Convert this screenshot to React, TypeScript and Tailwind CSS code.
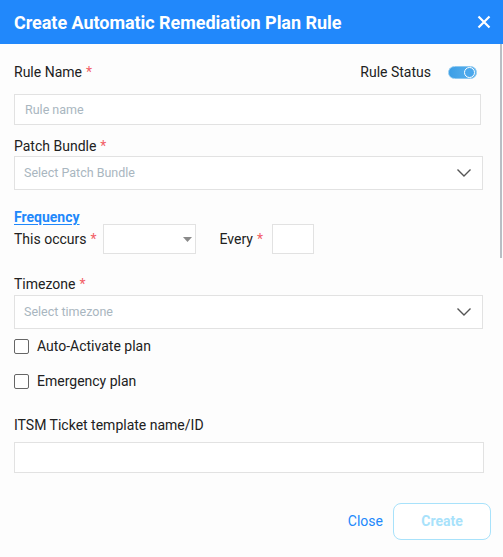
import React, { useState } from 'react';

const Star = () => <span className="text-[#f25f67] ml-1">*</span>;

const Chevron = () => (
  <svg width="16" height="10" viewBox="0 0 16 10" className="text-[#555]">
    <path d="M1.5 1.5 L8 8 L14.5 1.5" fill="none" stroke="currentColor" strokeWidth="1.4" />
  </svg>
);

const App: React.FC = () => {
  const [active, setActive] = useState(true);
  const [autoActivate, setAutoActivate] = useState(false);
  const [emergency, setEmergency] = useState(false);

  return (
    <div className="relative w-[503px] h-[557px] bg-[#fdfdfd] overflow-hidden text-[#212121]" style={{ fontFamily: 'Roboto, "Liberation Sans", sans-serif' }}>
      {/* Header */}
      <div className="h-[44px] bg-[#2188fb] flex items-center justify-between pl-[14px] pr-[12px]">
        <h1 className="text-white text-[18px] font-bold tracking-[-0.05px]">Create Automatic Remediation Plan Rule</h1>
        <button className="text-white">
          <svg width="14" height="14" viewBox="0 0 14 14">
            <path d="M1.5 1.5 L12.5 12.5 M12.5 1.5 L1.5 12.5" stroke="currentColor" strokeWidth="2.2" />
          </svg>
        </button>
      </div>

      {/* scrollbar */}
      <div className="absolute right-[1px] top-[44px] w-[2px] h-[214px] bg-[#b9bec4]" />

      <div className="pl-[14px] pr-[20px] pt-[19px] text-[14px]">
        {/* Rule name + status */}
        <div className="flex items-center justify-between h-[18px]">
          <label>Rule Name<Star /></label>
          <div className="flex items-center gap-[17px] pr-[6px]">
            <span>Rule Status</span>
            <button
              onClick={() => setActive(!active)}
              className="w-[29px] h-[13px] rounded-full bg-gradient-to-r from-[#3a9ee6] to-[#5db3ee] border border-[#8cc8f0] relative"
            >
              <span className="absolute right-[1px] top-[0px] w-[11px] h-[11px] rounded-full border border-white bg-[#4aa7ec]" />
            </button>
          </div>
        </div>
        <input
          placeholder="Rule name"
          className="mt-[13px] w-[467px] h-[31px] border border-[#e2e2e2] bg-white px-[10px] text-[12.5px] placeholder-[#a9b6c0] outline-none"
        />

        {/* Patch bundle */}
        <div className="mt-[11px] h-[18px]">Patch Bundle<Star /></div>
        <div className="mt-[2px] w-[469px] h-[34px] border border-[#e2e2e2] bg-white flex items-center justify-between pl-[9px] pr-[10px]">
          <span className="text-[12.5px] text-[#a9b6c0]">Select Patch Bundle</span>
          <Chevron />
        </div>

        {/* Frequency */}
        <div className="mt-[18px] text-[14px] font-bold text-[#2188fb] underline underline-offset-2 leading-[18px]">Frequency</div>
        <div className="mt-[-2px] flex items-center h-[30px]">
          <span>This occurs<Star /></span>
          <div className="ml-[6px] w-[93px] h-[30px] border border-[#e2e2e2] bg-white flex items-center justify-end pr-[3px]">
            <svg width="9" height="5" viewBox="0 0 9 5"><path d="M0 0 L9 0 L4.5 5 Z" fill="#8a8a8a" /></svg>
          </div>
          <span className="ml-[24px]">Every<Star /></span>
          <div className="ml-[9px] w-[42px] h-[30px] border border-[#e2e2e2] bg-white" />
        </div>

        {/* Timezone */}
        <div className="mt-[20px] h-[18px]">Timezone<Star /></div>
        <div className="mt-[3px] w-[469px] h-[34px] border border-[#e2e2e2] bg-white flex items-center justify-between pl-[9px] pr-[10px]">
          <span className="text-[12.5px] text-[#a9b6c0]">Select timezone</span>
          <Chevron />
        </div>

        {/* Checkboxes */}
        <label className="mt-[8px] flex items-center gap-[8px] h-[18px] cursor-pointer">
          <input type="checkbox" checked={autoActivate} onChange={() => setAutoActivate(!autoActivate)} className="appearance-none w-[15px] h-[15px] border border-[#666] rounded-[2px] bg-white" />
          <span>Auto-Activate plan</span>
        </label>
        <label className="mt-[17px] flex items-center gap-[8px] h-[18px] cursor-pointer">
          <input type="checkbox" checked={emergency} onChange={() => setEmergency(!emergency)} className="appearance-none w-[15px] h-[15px] border border-[#666] rounded-[2px] bg-white" />
          <span>Emergency plan</span>
        </label>

        {/* ITSM */}
        <div className="mt-[25px] h-[18px]">ITSM Ticket template name/ID</div>
        <input className="mt-[9px] w-[470px] h-[31px] border border-[#e2e2e2] bg-white px-[10px] outline-none" />

        {/* Footer */}
        <div className="mt-[30px] flex items-center justify-end gap-[10px] mr-[-8px]">
          <button className="text-[#2188fb] text-[14px]">Close</button>
          <button className="w-[98px] h-[37px] rounded-[8px] border border-[#a8e2fb] text-[#a8e2fb] font-bold text-[14px] bg-white">Create</button>
        </div>
      </div>
    </div>
  );
};

export default App;
